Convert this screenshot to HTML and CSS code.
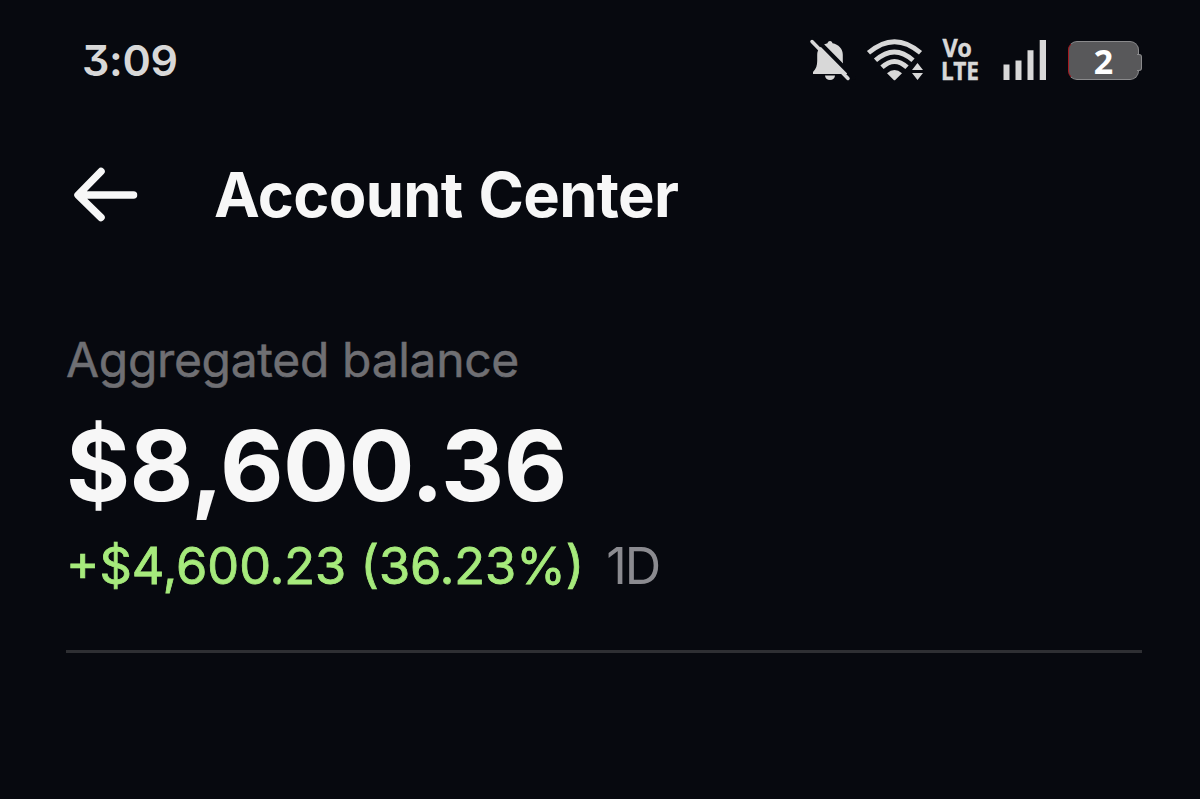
FILE: index.html
```html
<!DOCTYPE html>
<html lang="en">
<head>
  <meta charset="UTF-8">
  <meta name="viewport" content="width=device-width, initial-scale=1.0">
  <title>Account Center</title>
  <link rel="stylesheet" href="styles.css">
</head>
<body>
  <div class="status-bar">
    <span class="time">3:09</span>
    <div class="status-icons">
      <svg class="icon-bell" width="44" height="44" viewBox="808 38 44 44">
        <path d="M830 41c1.500 0 2.300 1 2.500 2.300 6 1.100 10.300 5.500 10.300 11.400v6c0 4 1 8 4.200 11.300v2h-34V72c3.200-3 4.200-7 4.200-11v-6c0-5.900 4.300-10.300 10.300-11.700 .2-1.300 1-2.300 2.500-2.300z"/>
        <path d="M825 75.500h10a5 4.500 0 0 1-10 0z"/>
        <path class="slash-gap" d="M815 38L854 77.500"/>
        <path class="slash" d="M812 41.500L848 78.500"/>
      </svg>
      <svg class="icon-wifi" width="58" height="44" viewBox="866 38 58 44">
        <path class="arc" d="M868.500 52.800Q894.500 30.500 920.500 52.800"/>
        <path class="arc" d="M875.500 60.300Q894.500 43.500 913 60.300"/>
        <path class="arc" d="M882 67.300Q894.500 55.500 907 67.300"/>
        <path d="M887 73.300Q894.500 66.500 902 73.300L895.500 79.800Q894.500 80.800 893.500 79.800z"/>
        <path d="M917.500 63l5.500 7h-11zM912 73h11l-5.500 7z"/>
      </svg>
      <svg class="icon-volte" width="38" height="44" viewBox="942 38 38 44">
        <text x="942.500" y="57.300" textLength="29.500" lengthAdjust="spacingAndGlyphs">Vo</text>
        <text x="941" y="79.800" textLength="38" lengthAdjust="spacingAndGlyphs">LTE</text>
      </svg>
      <svg class="icon-signal" width="44" height="42" viewBox="1003 39 44 42">
        <path d="M1003.500 64.500h6V80h-6zM1015.500 60.500h6V80h-6zM1027.500 50.300h6V80h-6zM1039.700 40h6.300v40h-6.300z"/>
      </svg>
      <div class="battery"><span>2</span></div>
    </div>
  </div>

  <header class="top-bar">
    <svg class="back" width="64" height="56" viewBox="0 0 64 56">
      <path d="M27 4.500L4 28l23 22.500M5 28h54.500"/>
    </svg>
    <h1>Account Center</h1>
  </header>

  <main class="summary">
    <p class="label">Aggregated balance</p>
    <p class="balance">$8,600.36</p>
    <p class="change">
      <span class="gain">+$4,600.23 (36.23%)</span>
      <span class="period">1D</span>
    </p>
  </main>
</body>
</html>
```

FILE: styles.css
```css
* {
  box-sizing: border-box;
}
body {
  margin: 0;
  height: 799px;
  overflow: hidden;
  background: #07090f;
  color: #f7f7f7;
  font-family: 'Inter', 'Liberation Sans', sans-serif;
}
h1, p {
  margin: 0;
  white-space: nowrap;
}

.status-bar {
  display: flex;
  align-items: center;
  justify-content: space-between;
  height: 120px;
  padding: 0 58px 0 82px;
}
.time {
  font-size: 43px;
  font-weight: 600;
  letter-spacing: -0.3px;
  color: #d8d8d8;
  font-feature-settings: "cv09";
}
.status-icons {
  display: flex;
  align-items: center;
}
.status-icons svg {
  display: block;
  overflow: visible;
  fill: #d8d8d8;
}
.slash, .slash-gap {
  stroke: #d8d8d8;
  stroke-width: 3.5;
  stroke-linecap: round;
}
.slash-gap {
  stroke: #07090f;
  stroke-width: 4;
}
.icon-wifi {
  margin-left: 14px;
}
.icon-wifi .arc {
  fill: none;
  stroke: #d8d8d8;
  stroke-width: 4.8;
}
.icon-volte {
  margin-left: 18px;
}
.icon-volte text {
  font-family: 'Noto Sans', 'Open Sans', sans-serif;
  font-size: 24.5px;
  font-weight: 700;
  stroke: #d8d8d8;
  stroke-width: 0.4;
}
.icon-signal {
  margin-left: 23px;
}
.battery {
  position: relative;
  width: 71px;
  height: 39px;
  margin: 0 3px 0 21px;
  border: 1px solid #8a8a8c;
  border-left-color: #a51a20;
  border-radius: 9px;
  background: #58585a;
  color: #fff;
  font-family: 'Noto Sans', sans-serif;
  font-size: 34px;
  font-weight: 700;
  line-height: 38px;
  text-align: center;
}
.battery::after {
  content: "";
  position: absolute;
  top: 12px;
  right: -4px;
  width: 4px;
  height: 15px;
  border: 1px solid #8a8a8c;
  border-left: 0;
  border-radius: 0 3px 3px 0;
  background: #58585a;
}

.top-bar {
  display: flex;
  align-items: center;
  height: 149px;
  padding-left: 74px;
}
.back {
  fill: none;
  stroke: #f7f7f7;
  stroke-width: 7.5;
  stroke-linecap: round;
  stroke-linejoin: round;
}
.top-bar h1 {
  margin-left: 76px;
  font-size: 61.4px;
  font-weight: 700;
  letter-spacing: -0.65px;
  word-spacing: 2px;
  line-height: 80px;
}

.summary {
  margin: 61px 58px 0 66px;
  padding-bottom: 54px;
  border-bottom: 3px solid #2e2f33;
}
.label {
  color: #6f6f73;
  font-size: 48px;
  letter-spacing: -0.33px;
  line-height: 60px;
  -webkit-text-stroke: 0.5px #6f6f73;
}
.balance {
  margin-top: 21px;
  font-size: 98px;
  font-weight: 700;
  letter-spacing: -0.6px;
  line-height: 110px;
}
.change {
  display: flex;
  margin-top: 15px;
  font-size: 50.5px;
  line-height: 60px;
}
.gain {
  color: #a6ea7c;
  -webkit-text-stroke: 0.8px #a6ea7c;
}
.period {
  margin-left: 22px;
  color: #8b8b90;
  letter-spacing: -2px;
}
```
